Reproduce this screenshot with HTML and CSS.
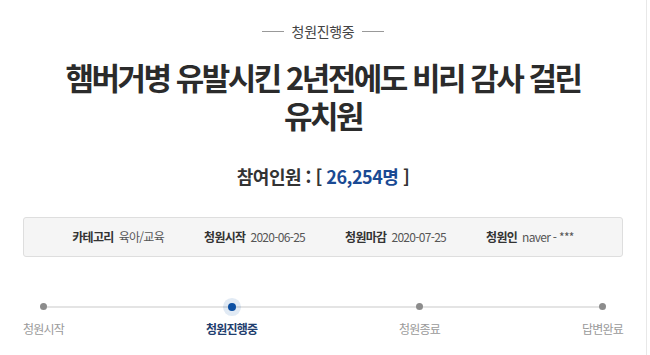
FILE: index.html
```html
<html lang="ko">

<head>
    <meta charset="UTF-8">
    <meta name="viewport" content="width=device-width, initial-scale=1.0">
    <title>청원진행중</title>
    <link rel="stylesheet" href="styles.css">
</head>

<body>
    <div class="page">
        <div class="container">
            <div class="status-head">
                <span class="rule"></span>
                <span class="status-text">청원진행중</span>
                <span class="rule"></span>
            </div>

            <h1 class="title">햄버거병 유발시킨 2년전에도 비리 감사 걸린<br>유치원</h1>

            <div class="count">참여인원 : [ <span class="num">26,254명</span> ]</div>

            <div class="info">
                <div class="info-item"><span class="label">카테고리</span><span class="value">육아/교육</span></div>
                <div class="info-item"><span class="label">청원시작</span><span class="value">2020-06-25</span></div>
                <div class="info-item"><span class="label">청원마감</span><span class="value">2020-07-25</span></div>
                <div class="info-item"><span class="label">청원인</span><span class="value">naver - ***</span></div>
            </div>

            <div class="steps">
                <div class="step">
                    <span class="dot"></span>
                    <span class="step-name">청원시작</span>
                </div>
                <div class="step active">
                    <span class="dot"></span>
                    <span class="step-name">청원진행중</span>
                </div>
                <div class="step">
                    <span class="dot"></span>
                    <span class="step-name">청원종료</span>
                </div>
                <div class="step">
                    <span class="dot"></span>
                    <span class="step-name">답변완료</span>
                </div>
            </div>
        </div>
    </div>
</body>

</html>
```

FILE: styles.css
```css
body {
    margin: 0;
    background: #ffffff;
    font-family: 'Noto Sans CJK KR', 'Noto Sans', sans-serif;
    color: #333;
}

.page {
    box-sizing: border-box;
    width: 647px;
    height: 355px;
    padding-top: 21px;
    border-right: 1px solid #e8e8e8;
    overflow: hidden;
}

.container {
    width: 600px;
    margin: 0 auto;
}

.status-head {
    display: flex;
    justify-content: center;
    align-items: center;
    gap: 8px;
    height: 20px;
}

.status-head .rule {
    width: 22px;
    height: 1px;
    background: #999;
}

.status-text {
    font-size: 14px;
    line-height: 20px;
    color: #444;
    letter-spacing: -0.3px;
}

.title {
    margin: 17px 0 0 0;
    text-align: center;
    font-size: 31px;
    line-height: 38px;
    font-weight: 700;
    letter-spacing: -2.5px;
    color: #2b2b2b;
}

.count {
    margin-top: 30px;
    text-align: center;
    font-size: 18px;
    line-height: 24px;
    font-weight: 700;
    letter-spacing: -0.5px;
    color: #333;
}

.count .num {
    color: #1a4a93;
}

.info {
    display: flex;
    justify-content: center;
    gap: 40px;
    margin-top: 29px;
    height: 38px;
    background: #f5f5f5;
    border: 1px solid #dedede;
    border-radius: 3px;
    font-size: 12px;
    line-height: 38px;
    letter-spacing: -0.7px;
}

.info-item {
    display: flex;
    gap: 5px;
}

.info .label {
    font-weight: 700;
    color: #333;
}

.info .value {
    color: #555;
}

.steps {
    position: relative;
    display: flex;
    justify-content: space-between;
    margin-top: 40px;
}

.steps::before {
    content: "";
    position: absolute;
    top: 9px;
    left: 20px;
    right: 20px;
    height: 2px;
    background: #e4e4e4;
}

.step {
    display: flex;
    flex-direction: column;
    align-items: center;
}

.dot {
    position: relative;
    width: 7px;
    height: 7px;
    margin: 6px 0 7px 0;
    border-radius: 50%;
    background: #8c8c8c;
}

.step.active .dot {
    width: 8px;
    height: 8px;
    margin: 6px 0 6px 0;
    background: #0b4fa3;
    box-shadow: 0 0 0 5px rgba(11, 79, 163, 0.12);
}

.step-name {
    margin-top: 4px;
    font-size: 12px;
    line-height: 16px;
    letter-spacing: -0.8px;
    color: #9a9a9a;
}

.step.active .step-name {
    font-weight: 700;
    color: #1f3e6e;
}
```
